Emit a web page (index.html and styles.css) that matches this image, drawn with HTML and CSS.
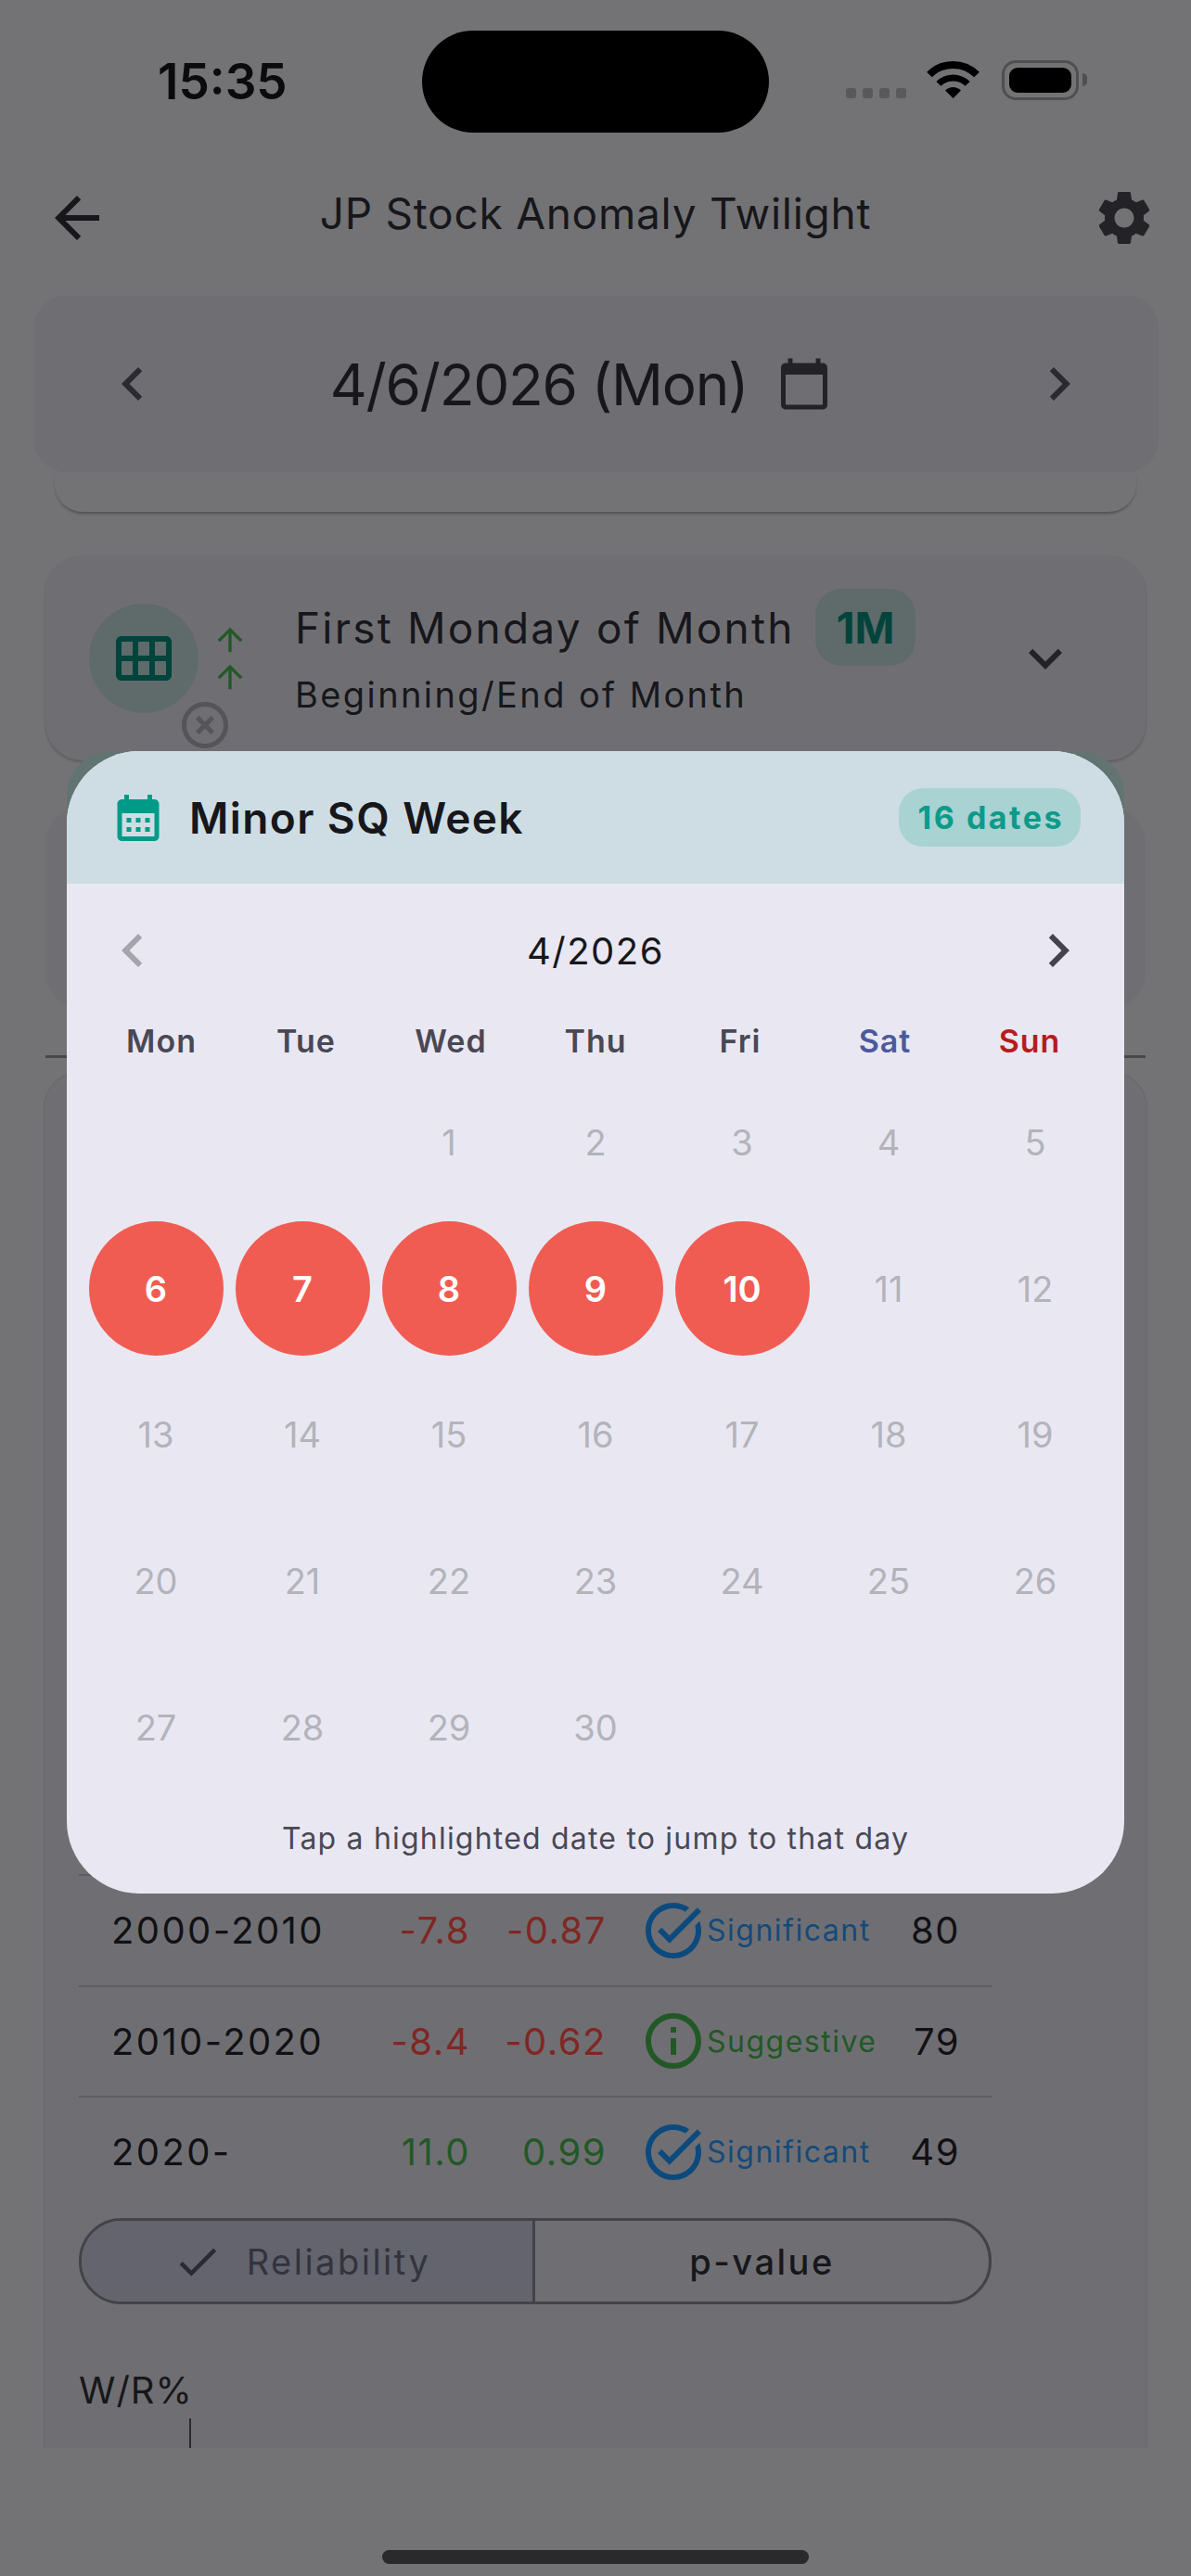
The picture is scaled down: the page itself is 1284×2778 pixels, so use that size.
FILE: index.html

```html
<!DOCTYPE html>
<html lang="en">
<head>
    <meta charset="UTF-8">
    <meta name="viewport" content="width=device-width, initial-scale=1.0">
    <title>JP Stock Anomaly Twilight</title>
    <link rel="stylesheet" href="styles.css">
</head>
<body>
<div class="screen">

    <div class="status">
        <div class="time">15:35</div>
        <div class="island"></div>
        <div class="sys">
            <div class="signal"><i></i><i></i><i></i><i></i></div>
            <svg class="wifi" viewBox="0 0 57 41" width="57" height="41">
                <path d="M3 15.5A36 36 0 0 1 54 15.5" fill="none" stroke="#000" stroke-width="8"/>
                <path d="M12.9 25.4A22 22 0 0 1 44.1 25.4" fill="none" stroke="#000" stroke-width="7"/>
                <path d="M28.5 41L20 32.5A12 12 0 0 1 37 32.5Z" fill="#000"/>
            </svg>
            <div class="battery"><div class="battery-fill"></div></div>
            <div class="battery-nub"></div>
        </div>
    </div>

    <div class="appbar">
        <svg class="back" viewBox="0 0 24 24" width="72" height="72"><path d="M20 11H7.83l5.59-5.59L12 4l-8 8 8 8 1.41-1.41L7.83 13H20v-2z"/></svg>
        <div class="appbar-title">JP Stock Anomaly Twilight</div>
        <svg class="gear" viewBox="0 0 24 24" width="70" height="70"><path d="M19.14 12.94c.04-.3.06-.61.06-.94 0-.32-.02-.64-.07-.94l2.03-1.58c.18-.14.23-.41.12-.61l-1.92-3.32c-.12-.22-.37-.29-.59-.22l-2.39.96c-.5-.38-1.03-.7-1.62-.94l-.36-2.54c-.04-.24-.24-.41-.48-.41h-3.84c-.24 0-.43.17-.47.41l-.36 2.54c-.59.24-1.13.57-1.62.94l-2.39-.96c-.22-.08-.47 0-.59.22L2.74 8.87c-.12.21-.08.47.12.61l2.03 1.58c-.05.3-.09.63-.09.94s.02.64.07.94l-2.03 1.58c-.18.14-.23.41-.12.61l1.92 3.32c.12.22.37.29.59.22l2.39-.96c.5.38 1.03.7 1.62.94l.36 2.54c.05.24.24.41.48.41h3.84c.24 0 .44-.17.47-.41l.36-2.54c.59-.24 1.13-.56 1.62-.94l2.39.96c.22.08.47 0 .59-.22l1.92-3.32c.12-.22.07-.47-.12-.61l-2.01-1.58zM12 15.6c-1.98 0-3.6-1.62-3.6-3.6s1.62-3.6 3.6-3.6 3.6 1.62 3.6 3.6-1.62 3.6-3.6 3.6z"/></svg>
    </div>

    <div class="date-card">
        <svg class="chev" viewBox="0 0 24 24" width="72" height="72"><path d="M15.41 7.41L14 6l-6 6 6 6 1.41-1.41L10.83 12z"/></svg>
        <div class="date-mid">
            <span class="date-text">4/6/2026 (Mon)</span>
            <svg viewBox="0 0 24 24" width="60" height="60"><path d="M20 3h-1V1h-2v2H7V1H5v2H4c-1.1 0-2 .9-2 2v16c0 1.1.9 2 2 2h16c1.1 0 2-.9 2-2V5c0-1.1-.9-2-2-2zm0 18H4V8h16v13z"/></svg>
        </div>
        <svg class="chev" viewBox="0 0 24 24" width="72" height="72"><path d="M8.59 16.59L10 18l6-6-6-6-1.41 1.41L13.17 12z"/></svg>
    </div>

    <div class="card-tail"></div>

    <div class="card anomaly">
        <div class="anomaly-icon">
            <svg viewBox="0 0 24 24" width="72" height="72"><path d="M20 4H4c-1.1 0-2 .9-2 2v12c0 1.1.9 2 2 2h16c1.1 0 2-.9 2-2V6c0-1.1-.9-2-2-2zM8 11H4V6h4v5zm6 0h-4V6h4v5zm6 0h-4V6h4v5zM8 18H4v-5h4v5zm6 0h-4v-5h4v5zm6 0h-4v-5h4v5z"/></svg>
        </div>
        <div class="arrows">
            <svg viewBox="0 0 24 24" width="40" height="40"><path d="M4 12l1.41 1.41L11 7.83V20h2V7.83l5.58 5.59L20 12l-8-8-8 8z"/></svg>
            <svg viewBox="0 0 24 24" width="40" height="40"><path d="M4 12l1.41 1.41L11 7.83V20h2V7.83l5.58 5.59L20 12l-8-8-8 8z"/></svg>
        </div>
        <svg class="cancel" viewBox="0 0 24 24" width="60" height="60"><path d="M14.59 8L12 10.59 9.41 8 8 9.41 10.59 12 8 14.59 9.41 16 12 13.41 14.59 16 16 14.59 13.41 12 16 9.41 14.59 8zM12 2C6.47 2 2 6.47 2 12s4.47 10 10 10 10-4.47 10-10S17.53 2 12 2zm0 18c-4.41 0-8-3.59-8-8s3.59-8 8-8 8 3.59 8 8-3.59 8-8 8z"/></svg>
        <div class="anomaly-text">
            <div class="anomaly-head">
                <span class="anomaly-title">First Monday of Month</span>
                <span class="tag">1M</span>
            </div>
            <div class="anomaly-sub">Beginning/End of Month</div>
        </div>
        <svg class="expand" viewBox="0 0 24 24" width="72" height="72"><path d="M16.59 8.59L12 13.17 7.41 8.59 6 10l6 6 6-6z"/></svg>
    </div>

    <div class="card next-card"></div>
    <div class="divider"></div>

    <div class="card stats">
        <div class="table">
            <div class="row">
                <span>2000-2010</span>
                <span class="num neg">-7.8</span>
                <span class="num neg">-0.87</span>
                <span class="rel sig">
                    <svg viewBox="0 0 24 24" width="72" height="72"><path d="M22 5.18L10.59 16.6l-4.24-4.24 1.41-1.41 2.83 2.83 10-10L22 5.18zm-2.21 5.04c.13.57.21 1.17.21 1.78 0 4.42-3.58 8-8 8s-8-3.58-8-8 3.58-8 8-8c1.58 0 3.04.46 4.28 1.22l1.44-1.44C16.1 2.67 14.13 2 12 2 6.48 2 2 6.48 2 12s4.48 10 10 10 10-4.48 10-10c0-1.19-.22-2.33-.6-3.39l-1.61 1.61z"/></svg>
                    Significant
                </span>
                <span class="num">80</span>
            </div>
            <div class="row">
                <span>2010-2020</span>
                <span class="num neg">-8.4</span>
                <span class="num neg">-0.62</span>
                <span class="rel sug">
                    <svg viewBox="0 0 24 24" width="72" height="72"><path d="M11 7h2v2h-2zm0 4h2v6h-2zm1-9C6.48 2 2 6.48 2 12s4.48 10 10 10 10-4.48 10-10S17.52 2 12 2zm0 18c-4.41 0-8-3.59-8-8s3.59-8 8-8 8 3.59 8 8-3.59 8-8 8z"/></svg>
                    Suggestive
                </span>
                <span class="num">79</span>
            </div>
            <div class="row">
                <span>2020-</span>
                <span class="num pos">11.0</span>
                <span class="num pos">0.99</span>
                <span class="rel sig">
                    <svg viewBox="0 0 24 24" width="72" height="72"><path d="M22 5.18L10.59 16.6l-4.24-4.24 1.41-1.41 2.83 2.83 10-10L22 5.18zm-2.21 5.04c.13.57.21 1.17.21 1.78 0 4.42-3.58 8-8 8s-8-3.58-8-8 3.58-8 8-8c1.58 0 3.04.46 4.28 1.22l1.44-1.44C16.1 2.67 14.13 2 12 2 6.48 2 2 6.48 2 12s4.48 10 10 10 10-4.48 10-10c0-1.19-.22-2.33-.6-3.39l-1.61 1.61z"/></svg>
                    Significant
                </span>
                <span class="num">49</span>
            </div>
        </div>

        <div class="toggle">
            <div class="toggle-btn selected">
                <svg viewBox="0 0 24 24" width="54" height="54"><path d="M9 16.17L4.83 12l-1.42 1.41L9 19 21 7l-1.41-1.41z"/></svg>
                Reliability
            </div>
            <div class="toggle-btn">p-value</div>
        </div>

        <div class="chart-label">W/R%</div>
        <div class="chart-axis"></div>
    </div>

    <div class="home-bar"></div>

    <div class="modal-under"></div>
    <div class="modal">
        <div class="modal-head">
            <svg viewBox="0 0 24 24" width="60" height="60"><path d="M19 4h-1V2h-2v2H8V2H6v2H5c-1.1 0-2 .9-2 2v14c0 1.1.9 2 2 2h14c1.1 0 2-.9 2-2V6c0-1.1-.9-2-2-2zm0 16H5V10h14v10zM9 14H7v-2h2v2zm4 0h-2v-2h2v2zm4 0h-2v-2h2v2zm-8 4H7v-2h2v2zm4 0h-2v-2h2v2zm4 0h-2v-2h2v2z"/></svg>
            <span class="modal-title">Minor SQ Week</span>
            <span class="count">16 dates</span>
        </div>
        <div class="month-row">
            <svg class="prev" viewBox="0 0 24 24" width="72" height="72"><path d="M15.41 7.41L14 6l-6 6 6 6 1.41-1.41L10.83 12z"/></svg>
            <span class="month">4/2026</span>
            <svg class="next" viewBox="0 0 24 24" width="72" height="72"><path d="M8.59 16.59L10 18l6-6-6-6-1.41 1.41L13.17 12z"/></svg>
        </div>
        <div class="weekdays">
            <span>Mon</span><span>Tue</span><span>Wed</span><span>Thu</span><span>Fri</span>
            <span class="sat">Sat</span><span class="sun">Sun</span>
        </div>
        <div class="days">
            <span></span><span></span>
            <span>1</span><span>2</span><span>3</span><span>4</span><span>5</span>
            <span class="hit"><b>6</b></span><span class="hit"><b>7</b></span><span class="hit"><b>8</b></span><span class="hit"><b>9</b></span><span class="hit"><b>10</b></span>
            <span>11</span><span>12</span>
            <span>13</span><span>14</span><span>15</span><span>16</span><span>17</span><span>18</span><span>19</span>
            <span>20</span><span>21</span><span>22</span><span>23</span><span>24</span><span>25</span><span>26</span>
            <span>27</span><span>28</span><span>29</span><span>30</span>
        </div>
        <div class="hint">Tap a highlighted date to jump to that day</div>
    </div>

</div>
</body>
</html>
```

FILE: styles.css

```css
* {
    box-sizing: border-box;
}
body {
    margin: 0;
    font-family: Inter, "Liberation Sans", sans-serif;
    color: #17171b;
}
.screen {
    position: relative;
    width: 1284px;
    height: 2778px;
    overflow: hidden;
    background: #737375;
}

/* status bar */
.status {
    display: flex;
    height: 175px;
    padding: 33px 0 0 170px;
}
.time {
    width: 285px;
    height: 110px;
    line-height: 110px;
    font-size: 53px;
    font-weight: 600;
    color: #0b0b0d;
}
.island {
    width: 374px;
    height: 110px;
    border-radius: 55px;
    background: #000;
}
.sys {
    display: flex;
    align-items: flex-start;
    height: 80px;
    padding: 32px 0 0 83px;
}
.signal {
    display: flex;
    gap: 7px;
    width: 87px;
    padding-top: 30px;
}
.signal i {
    width: 11px;
    height: 11px;
    border-radius: 3px;
    background: #59595b;
}
.battery {
    width: 83px;
    height: 43px;
    margin-left: 24px;
    padding: 5px;
    border: 3px solid #4f4f52;
    border-radius: 15px;
}
.battery-fill {
    height: 100%;
    border-radius: 9px;
    background: #000;
}
.battery-nub {
    width: 5px;
    height: 14px;
    margin: 14px 0 0 4px;
    border-radius: 0 5px 5px 0;
    background: #4f4f52;
}

/* app bar */
.appbar {
    display: grid;
    grid-template-columns: 1fr auto 1fr;
    align-items: center;
    height: 144px;
    padding: 0 37px 24px 37px;
}
.back {
    margin-left: 10px;
    fill: #17171b;
}
.appbar-title {
    margin-bottom: 10px;
    font-size: 46px;
    letter-spacing: 0.75px;
}
.gear {
    justify-self: end;
    fill: #232327;
}

/* date selector */
.date-card {
    display: flex;
    align-items: center;
    justify-content: space-between;
    height: 190px;
    margin: 0 35px 0 37px;
    padding: 0 71px 0 70px;
    border-radius: 34px;
    background: #6e6e73;
}
.chev {
    fill: #2a2a30;
}
.date-mid {
    display: flex;
    align-items: center;
    gap: 31px;
    margin-right: 32px;
    fill: #232327;
}
.date-text {
    font-size: 62px;
    letter-spacing: -1.3px;
}
.card-tail {
    height: 43px;
    margin: 0 59px 0 59px;
    border-radius: 0 0 30px 30px;
    box-shadow: 0 3px 3px -1px rgba(0, 0, 0, 0.3);
}

.card {
    margin: 0 49px;
    border-radius: 40px;
    background: #6f6f73;
}
.anomaly {
    position: relative;
    display: flex;
    align-items: center;
    height: 221px;
    margin-top: 47px;
    padding: 0 72px 0 47px;
    box-shadow: 0 2px 3px rgba(0, 0, 0, 0.2);
}
.anomaly-icon {
    display: flex;
    align-items: center;
    justify-content: center;
    width: 118px;
    height: 118px;
    border-radius: 50%;
    background: #5f6a6b;
    fill: #00443c;
}
.arrows {
    display: flex;
    flex-direction: column;
    margin-left: 14px;
    fill: #225826;
}
.cancel {
    position: absolute;
    left: 142px;
    top: 153px;
    fill: #555558;
}
.anomaly-text {
    align-self: flex-start;
    margin: 36px 0 0 50px;
}
.anomaly-head {
    display: flex;
    align-items: center;
    gap: 22px;
}
.anomaly-title {
    font-size: 46px;
    letter-spacing: 2.2px;
}
.tag {
    display: flex;
    align-items: center;
    height: 83px;
    padding: 0 23px;
    border-radius: 28px;
    font-size: 46px;
    font-weight: 700;
    color: #00443c;
    background: #5f6a6b;
}
.anomaly-sub {
    margin-top: 8px;
    font-size: 38px;
    line-height: 46px;
    letter-spacing: 2.4px;
}
.expand {
    margin-left: auto;
    fill: #232327;
}
.next-card {
    height: 218px;
    margin-top: 50px;
}
.divider {
    height: 3px;
    margin: 50px 49px 0;
    background: #47474b;
}

/* stats card, cut off by the bottom sheet */
.stats {
    height: 1485px;
    margin: 14px 47px 0;
    padding: 865px 0 0 37px;
    border-radius: 40px 40px 0 0;
    border: 1px solid #68686c;
    border-bottom: 0;
    overflow: hidden;
}
.row {
    display: grid;
    grid-template-columns: 281px 106px 147px 291px 90px;
    align-items: center;
    width: 984px;
    height: 119.5px;
    padding-left: 35px;
    border-top: 2px solid #5e5e62;
    font-size: 40px;
    letter-spacing: 2.4px;
    color: #111114;
}
.num {
    text-align: right;
    letter-spacing: 1.5px;
}
.neg {
    color: #7f2723;
}
.pos {
    color: #225826;
}
.rel {
    display: flex;
    align-items: center;
    padding-left: 36px;
    font-size: 32px;
    letter-spacing: 1.5px;
}
.rel svg {
    flex: none;
}
.sig {
    color: #144a7a;
    fill: #0c4a7d;
}
.sug {
    color: #225826;
    fill: #225826;
}
.toggle {
    display: flex;
    width: 984px;
    height: 93px;
    margin-top: 12px;
    border: 3px solid #434347;
    border-radius: 46px;
    overflow: hidden;
}
.toggle-btn {
    display: flex;
    flex: 1;
    align-items: center;
    justify-content: center;
    gap: 26px;
    padding-top: 2px;
    font-size: 38px;
    font-weight: 500;
    letter-spacing: 2.5px;
}
.toggle-btn.selected {
    flex: none;
    width: 489px;
    padding-right: 12px;
    color: #33333d;
    font-weight: 400;
    fill: #2a2a34;
    background: #63646e;
    border-right: 3px solid #434347;
}
.chart-label {
    margin-top: 68px;
    font-size: 40px;
    letter-spacing: 1px;
}
.chart-axis {
    width: 2px;
    height: 50px;
    margin: 6px 0 0 119px;
    background: #2c2c30;
}
.home-bar {
    width: 460px;
    height: 15px;
    margin: 110px auto 0;
    border-radius: 8px;
    background: #2a2a2c;
}

/* bottom sheet calendar */
.modal-under {
    position: absolute;
    left: 72px;
    top: 811px;
    width: 1140px;
    height: 120px;
    border-radius: 46px 46px 0 0;
    background: #627472;
}
.modal {
    position: absolute;
    left: 72px;
    top: 810px;
    width: 1140px;
    height: 1232px;
    border-radius: 78px;
    background: #e9e8f2;
    overflow: hidden;
}
.modal-head {
    display: flex;
    align-items: center;
    height: 143px;
    padding: 0 47px 0 47px;
    background: #cedde4;
    fill: #019a88;
}
.modal-title {
    margin-left: 25px;
    font-size: 46px;
    font-weight: 600;
    letter-spacing: 1.4px;
}
.count {
    margin-left: auto;
    padding: 11px 18px 11px 21px;
    border-radius: 26px;
    font-size: 34px;
    font-weight: 700;
    letter-spacing: 2.5px;
    color: #0d9a8a;
    background: #a9d2d3;
}
.month-row {
    display: flex;
    align-items: center;
    justify-content: space-between;
    height: 149px;
    padding: 0 35px 5px;
}
.prev {
    fill: #a4a4ac;
}
.next {
    fill: #44434d;
}
.month {
    font-size: 40px;
    letter-spacing: 1.5px;
}
.weekdays {
    display: grid;
    grid-template-columns: repeat(7, 156px);
    padding-left: 24px;
    font-size: 34px;
    font-weight: 600;
    letter-spacing: 1px;
    text-align: center;
    color: #4a4855;
}
.sat {
    color: #4b5a9e;
}
.sun {
    color: #b71c1c;
}
.days {
    display: grid;
    grid-template-columns: repeat(7, 158px);
    grid-auto-rows: 157.7px;
    margin-top: 10px;
    padding-left: 17px;
    font-size: 38px;
    color: #b3b3bb;
}
.days span {
    display: flex;
    align-items: center;
    justify-content: center;
}
.days .hit b {
    display: flex;
    align-items: center;
    justify-content: center;
    width: 145px;
    height: 145px;
    border-radius: 50%;
    font-weight: 600;
    color: #fff;
    background: #f15c52;
}
.hint {
    margin-top: 22px;
    font-size: 32px;
    letter-spacing: 1.2px;
    text-align: center;
    color: #4a4855;
}
```
